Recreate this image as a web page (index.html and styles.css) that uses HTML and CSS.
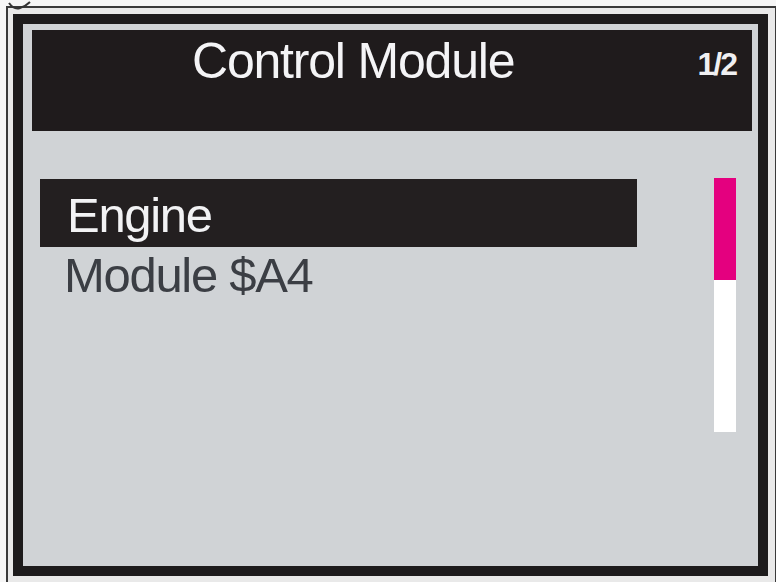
FILE: index.html
```html
<!DOCTYPE html>
<html>
<head>
<meta charset="utf-8">
<link rel="stylesheet" href="styles.css">
</head>
<body>
<svg class="mark" width="30" height="12" viewBox="0 0 30 12"><path d="M3 3 Q8 10 14 8 Q20 6 24 2" fill="none" stroke="#333" stroke-width="2"/></svg>
<div class="frame">
  <div class="bezel">
    <div class="screen">
      <div class="header">
        <div class="title">Control Module</div>
        <div class="page">1/2</div>
      </div>
      <div class="content">
        <div class="list">
          <div class="item selected">Engine</div>
          <div class="item">Module $A4</div>
        </div>
        <div class="scroll">
          <div class="thumb"></div>
        </div>
      </div>
    </div>
  </div>
</div>
</body>
</html>
```
FILE: styles.css
```css
html, body {
  margin: 0;
  padding: 0;
}
body {
  width: 776px;
  height: 582px;
  background: #f6f6f6;
  font-family: "Liberation Sans", Arial, sans-serif;
  overflow: hidden;
  position: relative;
}
.mark {
  position: absolute;
  left: 6px;
  top: 0;
}
.frame {
  margin: 6px 3px 0 6px;
  width: 759px;
  height: 566px;
  border: 2px solid #3a3a3a;
  padding: 6px 3px 2px 5px;
  background: #e9e9e9;
  box-sizing: content-box;
}
.bezel {
  border: 10px solid #1d1b1c;
  background: #d0d3d6;
  width: 735px;
  height: 542px;
}
.screen {
  width: 735px;
  height: 542px;
  display: flex;
  flex-direction: column;
}
.header {
  margin: 6px 6px 0 9px;
  height: 101px;
  background: #1f1b1c;
  display: flex;
  align-items: flex-start;
  box-sizing: border-box;
  padding-top: 6px;
}
.title {
  margin-left: 160px;
  font-size: 50px;
  line-height: 50px;
  letter-spacing: -1.2px;
  color: #f4f4f6;
}
.page {
  margin-left: auto;
  margin-right: 16px;
  margin-top: 12px;
  font-size: 32px;
  line-height: 32px;
  font-weight: bold;
  letter-spacing: -2px;
  color: #f0f0f2;
}
.content {
  display: flex;
  align-items: flex-start;
}
.list {
  width: 597px;
  margin-left: 17px;
  margin-top: 48px;
}
.item {
  font-size: 49px;
  line-height: 56px;
  letter-spacing: -1.3px;
  color: #3b3e44;
  padding-left: 24px;
}
.item.selected {
  background: #231f20;
  color: #f2f2f4;
  padding-top: 8px;
  padding-bottom: 4px;
  padding-left: 27px;
}
.scroll {
  margin-left: auto;
  margin-right: 22px;
  margin-top: 47px;
  width: 22px;
  height: 254px;
  background: #ffffff;
}
.thumb {
  height: 102px;
  background: #e4007f;
}
```
